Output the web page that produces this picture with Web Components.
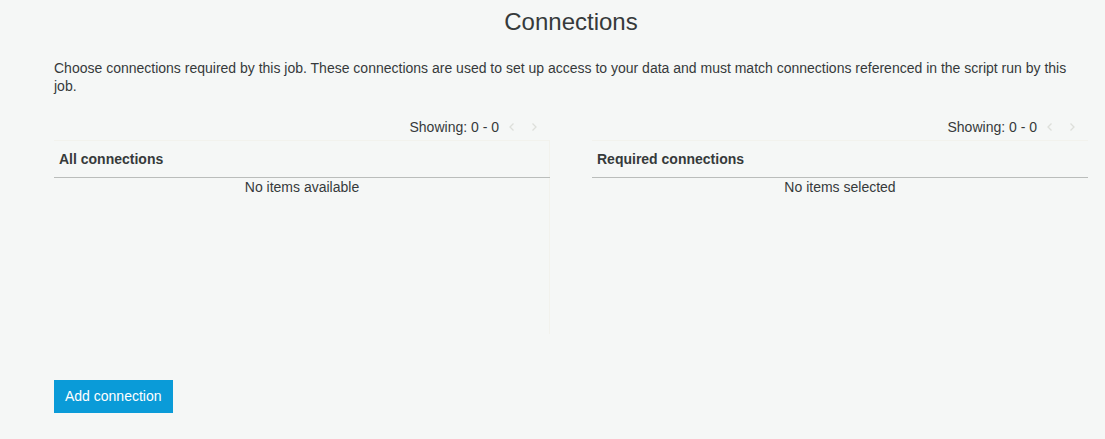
<!DOCTYPE html>
<html lang="en">
<head>
<meta charset="utf-8">
<title>Connections</title>
<style>
body { margin: 0; background: #f5f7f6; color: #363a3b; font: 14px/18px "Liberation Sans", Arial, sans-serif; }
</style>
</head>
<body>
<connections-page>
  <connection-list heading="All connections" empty="No items available" divided></connection-list>
  <connection-list heading="Required connections" empty="No items selected"></connection-list>
  <action-button slot="actions">Add connection</action-button>
</connections-page>
<script>
class ConnectionsPage extends HTMLElement {
  constructor() {
    super();
    this.attachShadow({ mode: "open" }).innerHTML = `
      <style>
        :host { display: block; padding: 8px 17px 24px 54px; }
        h1 { margin: 0; font-size: 24px; line-height: 28px; font-weight: 400; text-align: center; }
        p { margin: 23px 0; }
        .lists { display: grid; grid-template-columns: 1fr 1fr; gap: 42px; min-height: 262px; }
      </style>
      <main>
        <h1>Connections</h1>
        <p>Choose connections required by this job. These connections are used to set up access to your data and must match connections referenced in the script run by this job.</p>
        <div class="lists"><slot></slot></div>
        <slot name="actions"></slot>
      </main>`;
  }
}
class ListPager extends HTMLElement {
  constructor() {
    super();
    this.attachShadow({ mode: "open" }).innerHTML = `
      <style>
        :host { display: flex; justify-content: flex-end; align-items: center; gap: 7px; padding-right: 10px; }
        button { display: flex; width: 12px; height: 18px; align-items: center; justify-content: center; border: 0; padding: 0; background: none; }
        .buttons { display: flex; gap: 10px; }
        svg { display: block; fill: none; stroke: #dddfda; stroke-width: 1.3; }
      </style>
      <span><slot></slot></span>
      <div class="buttons">
        <button disabled aria-label="Previous page"><svg width="6" height="8" viewBox="0 0 6 8"><path d="M4.5.5 1 4 4.5 7.5"/></svg></button>
        <button disabled aria-label="Next page"><svg width="6" height="8" viewBox="0 0 6 8"><path d="M1.5.5 5 4 1.5 7.5"/></svg></button>
      </div>`;
  }
}
customElements.define("list-pager", ListPager);
class ConnectionList extends HTMLElement {
  constructor() {
    super();
    this.attachShadow({ mode: "open" }).innerHTML = `
      <style>
        :host { display: block; min-width: 0; }
        .box { margin-top: 4px; min-height: 194px; box-shadow: inset 0 1px #f2f2ed; }
        :host([divided]) .box { box-shadow: inset -1px 1px #f2f2ed; }
        table { width: 100%; border-collapse: collapse; }
        th { padding: 10px 5px 9px; text-align: left; border-bottom: 1px solid #babdbb; }
        td { padding: 0; text-align: center; }
      </style>
      <list-pager>Showing: 0 - 0</list-pager>
      <div class="box">
        <table>
          <thead><tr><th scope="col"></th></tr></thead>
          <tbody><tr><td></td></tr></tbody>
        </table>
      </div>`;
  }
  connectedCallback() {
    this.shadowRoot.querySelector("th").textContent = this.getAttribute("heading");
    this.shadowRoot.querySelector("td").textContent = this.getAttribute("empty");
  }
}
class ActionButton extends HTMLElement {
  constructor() {
    super();
    this.attachShadow({ mode: "open" }).innerHTML = `
      <style>
        :host { display: inline-block; }
        button { display: block; padding: 7px 11px 8px; border: 0; background: #0a9bd8; color: #fff; font: inherit; }
      </style>
      <button type="button"><slot></slot></button>`;
  }
}
customElements.define("connection-list", ConnectionList);
customElements.define("action-button", ActionButton);
customElements.define("connections-page", ConnectionsPage);
</script>
</body>
</html>
